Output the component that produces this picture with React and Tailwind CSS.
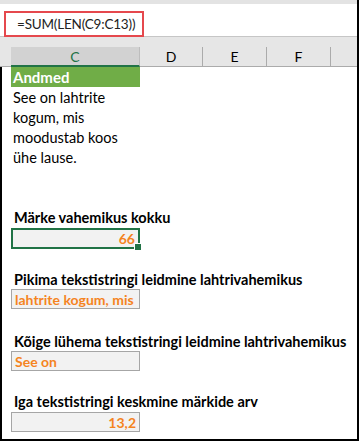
const HEADERS = [
  { label: "D", w: "w-[63px]" },
  { label: "E", w: "w-[64px]" },
  { label: "F", w: "w-[64px]" },
];

function ResultBox({ children, right, active, className = "" }) {
  return (
    <div
      className={`relative w-[129px] bg-[#f2f2f2] flex items-center px-[3px] text-[#f5841f] font-bold text-[14px] whitespace-nowrap ${
        right ? "justify-end" : "justify-start"
      } ${active ? "border-2 border-[#217346]" : "border border-[#a6a6a6]"} ${className}`}
    >
      {children}
      {active && (
        <div className="absolute -right-[4px] -bottom-[4px] w-[6px] h-[6px] bg-[#217346] border border-white box-content" />
      )}
    </div>
  );
}

export default function App() {
  return (
    <div className="w-[359px] h-[441px] bg-white border-r-2 border-black flex flex-col overflow-hidden font-['Lato',sans-serif] text-black">
      {/* Formula bar */}
      <div className="bg-[#e3e3e3] pt-[4px]">
        <div className="h-[33px] bg-white border-b border-[#c6c6c6] pl-[4px] pt-[7px]">
          <div className="w-[140px] h-[26px] border-2 border-[#e5484d] flex items-center pl-[11px] text-[13.5px] tracking-[-0.2px] whitespace-nowrap text-[#222]">
            =SUM(LEN(C9:C13))
          </div>
        </div>
      </div>

      {/* Column headers */}
      <div className="bg-[#e6e6e6] h-[10px]" />
      <div className="bg-[#e6e6e6] flex h-[20px] text-[14px]">
        <div className="w-[11px] border-b border-[#ababab]" />
        <div className="w-[129px] bg-[#d2d2d2] border-b-2 border-[#217346] border-r border-r-[#bdbdbd] flex items-center justify-center text-[#217346]">
          C
        </div>
        {HEADERS.map((h) => (
          <div
            key={h.label}
            className={`${h.w} border-b border-r border-[#ababab] flex items-center justify-center`}
          >
            {h.label}
          </div>
        ))}
        <div className="flex-1 border-b border-[#ababab]" />
      </div>

      {/* Sheet body */}
      <div className="flex-1 border-l-2 border-b-2 border-black pl-[9px] text-[14.5px]">
        <div className="w-[129px] h-[20px] bg-[#70ad47] text-white font-bold text-[15px] leading-[20px] px-[2px]">
          Andmed
        </div>
        <div className="mt-[1px] px-[2px] leading-[20px]">
          <div>See on lahtrite</div>
          <div>kogum, mis</div>
          <div>moodustab koos</div>
          <div>ühe lause.</div>
        </div>

        <div className="mt-[40px] h-[20px] leading-[20px] px-[3px] font-bold whitespace-nowrap">
          Märke vahemikus kokku
        </div>
        <ResultBox right active className="h-[21px]">
          66
        </ResultBox>

        <div className="mt-[21px] h-[19px] leading-[19px] px-[3px] font-bold whitespace-nowrap">
          Pikima tekstistringi leidmine lahtrivahemikus
        </div>
        <ResultBox className="h-[20px]">lahtrite kogum, mis</ResultBox>

        <div className="mt-[23px] h-[19px] leading-[19px] px-[3px] font-bold whitespace-nowrap">
          Kõige lühema tekstistringi leidmine lahtrivahemikus
        </div>
        <ResultBox className="h-[20px]">See on</ResultBox>

        <div className="mt-[20px] h-[21px] leading-[21px] px-[3px] font-bold whitespace-nowrap">
          Iga tekstistringi keskmine märkide arv
        </div>
        <ResultBox right className="h-[20px]">
          13,2
        </ResultBox>
      </div>
    </div>
  );
}
